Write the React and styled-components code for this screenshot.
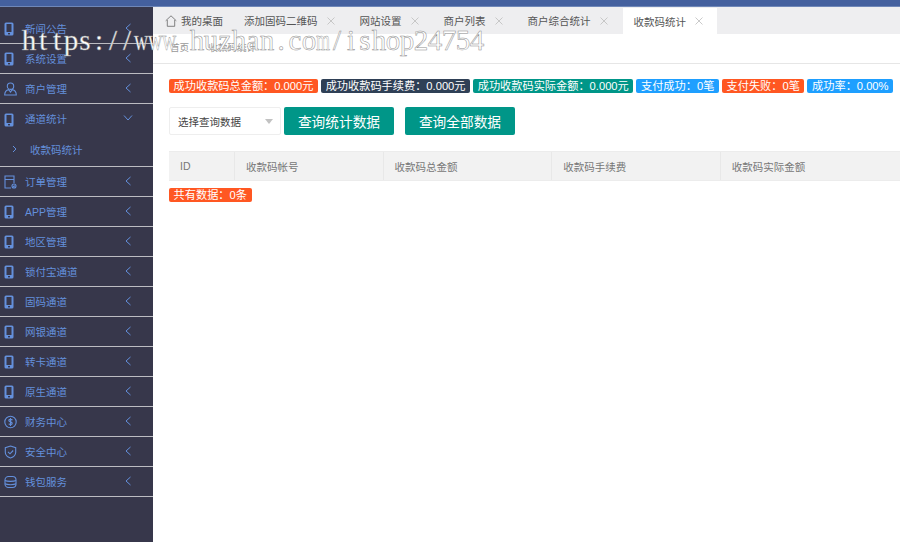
import React from "react";
import styled, { createGlobalStyle } from "styled-components";

const Global = createGlobalStyle`
  html, body { margin: 0; padding: 0; height: 100%; background: #fff; overflow: hidden; }
  #root { height: 100%; }
  * { box-sizing: border-box; }
`;
const font = `"Liberation Sans", "Noto Sans CJK SC", sans-serif`;

const Page = styled.div`
  position: relative; width: 900px; height: 542px; overflow: hidden;
  display: flex; flex-direction: column; font-family: ${font}; font-size: 10.5px; background: #fff;
`;
const TopBar = styled.div`
  height: 7px; flex: none; background: #44609e; border-bottom: 1px solid #6f87b8;
`;
const Body = styled.div`display: flex; flex: 1; min-height: 0;`;
const Sidebar = styled.nav`
  width: 153px; flex: none; background: #37374b; padding-top: 7px;
`;
const Item = styled.div`
  height: 30px; display: flex; align-items: center; position: relative;
  color: #6490dc; border-bottom: ${p => (p.$open ? "0" : "1px solid #bcbcc2")};
  padding: 1px 0 0 4px;
`;
const IconSlot = styled.span`
  width: 21px; flex: none; display: flex; align-items: center;
`;
const ItemLabel = styled.span`flex: 1; line-height: 1;`;
const Chevron = styled.svg`
  width: ${p => (p.$down ? "10px" : "8px")}; height: 10px; margin-right: ${p => (p.$down ? "20px" : "21px")}; margin-top: -3px; flex: none;
`;
const SubItem = styled.div`
  height: 33px; display: flex; align-items: center; color: #6490dc;
  border-bottom: 1px solid #bcbcc2; padding: 0 0 2px 12px; gap: 13px;
`;
const SubArrow = styled.svg`width: 5px; height: 8px; flex: none;`;

const Main = styled.main`flex: 1; min-width: 0; display: flex; flex-direction: column;`;
const TabBar = styled.div`
  height: 27px; flex: none; background: #eeeef0; display: flex; align-items: stretch; padding-left: 1px; color: #555;
`;
const Tab = styled.div`
  display: flex; align-items: center; padding: 0 ${p => (p.$home ? "10px" : "13px")} 0 11px;
  background: ${p => (p.$active ? "#fff" : "transparent")};
  margin: ${p => (p.$active ? "1px 0 0 1px" : "0")};
  gap: ${p => (p.$home ? "4px" : "8px")};
`;
const CloseIcon = styled.svg`width: 10px; height: 10px; flex: none;`;
const Crumbs = styled.div`
  height: 30px; flex: none; border-bottom: 1px solid #e6e6e6; display: flex; align-items: center;
  padding: 0 0 3px 17px; gap: 19px; color: #999; font-size: 9.6px;
`;
const Content = styled.div`padding: 15px 0 0 16px;`;
const Stats = styled.div`display: flex; gap: 3px;`;
const Badge = styled.span`
  height: 14px; line-height: 14px; padding: 0 4.6px; color: #fff; font-size: 11.2px; white-space: nowrap;
  border-radius: 2px; background: ${p => p.$bg};
`;
const Filters = styled.div`display: flex; margin-top: 14px;`;
const Select = styled.div`
  width: 112px; height: 28px; border: 1px solid #eee; border-radius: 2px; background: #fff;
  display: flex; align-items: center; justify-content: space-between; padding: 0 7px 0 8px; color: #444;
`;
const Caret = styled.span`
  width: 0; height: 0; border-left: 4.5px solid transparent; border-right: 4.5px solid transparent; border-top: 5px solid #c2c2c2;
`;
const Button = styled.button`
  width: 110px; height: 28px; margin-left: ${p => p.$gap}px; border: 0; border-radius: 2px; background: #009688;
  color: #fff; font: 13.7px ${font}; padding: 0;
`;
const TableHead = styled.div`
  margin-top: 16px; height: 30px; display: grid; grid-template-columns: 66px 148.600px 168.600px 168.600px 1fr;
  background: #f2f2f2; border-top: 1px solid #ececec; border-bottom: 1px solid #ececec; color: #777;
`;
const HeadCell = styled.div`
  display: flex; align-items: center; padding-left: 11px;
  border-right: 1px solid #e8e8e8;
  &:last-child { border-right: 0; }
`;
const Total = styled(Badge)`display: inline-block; margin-top: 7px;`;
const Watermark = styled.div`
  position: absolute; left: 22px; top: 24px; display: flex; font-family: "Liberation Serif", serif; font-size: 29px;
  line-height: 32px; color: #fff; white-space: nowrap; -webkit-text-stroke: 0.5px #8f8f8f; pointer-events: none;
`;
const WatermarkChar = styled.span`
  width: 14px; flex: none; display: flex; justify-content: center;
  transform: scaleX(${p => p.$squeeze});
`;

const blue = "#6490dc";
const Phone = () => (
  <svg width="10" height="14" viewBox="0 0 10 14">
    <rect x="0.5" y="0.5" width="9" height="13" rx="1.5" fill={blue} />
    <rect x="2.5" y="2" width="5" height="8" fill="#37374b" />
    <rect x="4" y="11" width="2" height="1.4" fill="#37374b" />
  </svg>
);
const stroke = { fill: "none", stroke: blue, strokeWidth: 1.1 };
const User = () => (
  <svg width="13" height="14" viewBox="0 0 13 14" {...stroke}>
    <circle cx="6.5" cy="4.2" r="3.2" /><path d="M.7 13c0-3 2-5 4-5.4l1.8 2.4 1.8-2.4c2 .4 4 2.4 4 5.4z" />
  </svg>
);
const Order = () => (
  <svg width="13" height="14" viewBox="0 0 13 14" {...stroke}>
    <path d="M7 13H1V1h9v7M1 4.500h9" /><circle cx="10" cy="11" r="2" /><path d="M9.200 11l.7.7 1-1.200" />
  </svg>
);
const Money = () => (
  <svg width="13" height="14" viewBox="0 0 13 14" {...stroke}>
    <circle cx="6.500" cy="7" r="5.700" /><path d="M8.400 5.200C8 4.300 5 3.900 4.800 5.400c-.2 1.900 3.600 1 3.400 3-.2 1.600-3 1.200-3.500.3M6.500 3v8" />
  </svg>
);
const Shield = () => (
  <svg width="13" height="14" viewBox="0 0 13 14" {...stroke}>
    <path d="M6.500 1l5.200 1.700v4.600c0 3-2.500 4.900-5.200 5.700C3.800 12.200 1.300 10.300 1.300 7.300V2.700z" /><path d="M4 6.800l2 2 3.200-3.300" />
  </svg>
);
const Wallet = () => (
  <svg width="13" height="14" viewBox="0 0 13 14" {...stroke}>
    <rect x="1" y="1.500" width="11" height="11" rx="3.500" /><path d="M1 5.500c2 1.200 9 1.200 11 0M1 8.800c2 1.200 9 1.200 11 0" />
  </svg>
);
const Left = () => (
  <Chevron viewBox="0 0 8 10"><path d="M6.500 1L2 5l4.500 4" fill="none" stroke={blue} strokeWidth="1" /></Chevron>
);
const Down = () => (
  <Chevron $down viewBox="0 0 10 8"><path d="M1 1.500l4 4.500 4-4.500" fill="none" stroke={blue} strokeWidth="1" /></Chevron>
);
const Close = () => (
  <CloseIcon viewBox="0 0 10 10"><path d="M1.500 1.500l7 7M8.500 1.500l-7 7" stroke="#bdbdbd" strokeWidth=".8" /></CloseIcon>
);
const Home = () => (
  <svg width="12" height="12" viewBox="0 0 12 12" fill="none" stroke="#666" strokeWidth=".8">
    <path d="M.7 5.800L6 .8l5.300 5M2.300 5v6.300h7.400V5" />
  </svg>
);

const menu = [
  ["新闻公告", Phone], ["系统设置", Phone], ["商户管理", User], ["通道统计", Phone, true],
  ["订单管理", Order], ["APP管理", Phone], ["地区管理", Phone], ["锁付宝通道", Phone], ["固码通道", Phone],
  ["网银通道", Phone], ["转卡通道", Phone], ["原生通道", Phone], ["财务中心", Money], ["安全中心", Shield], ["钱包服务", Wallet],
];
const tabs = ["添加固码二维码", "网站设置", "商户列表", "商户综合统计"];
const stats = [
  ["成功收款码总金额：0.000元", "#ff5722"], ["成功收款码手续费：0.000元", "#2f4056"], ["成功收款码实际金额：0.000元", "#009688"],
  ["支付成功：0笔", "#1e9fff"], ["支付失败：0笔", "#ff5722"], ["成功率：0.00%", "#1e9fff"],
];
const heads = ["ID", "收款码帐号", "收款码总金额", "收款码手续费", "收款码实际金额"];
const squeeze = { w: 0.68, m: 0.62 };

export default function App() {
  return (
    <Page>
      <Global />
      <TopBar />
      <Body>
        <Sidebar>
          {menu.map(([label, Icon, open]) => (
            <React.Fragment key={label}>
              <Item $open={open}>
                <IconSlot><Icon /></IconSlot>
                <ItemLabel>{label}</ItemLabel>
                {open ? <Down /> : <Left />}
              </Item>
              {open && (
                <SubItem>
                  <SubArrow viewBox="0 0 5 8"><path d="M1 1l3 3-3 3" fill="none" stroke={blue} /></SubArrow>
                  <span>收款码统计</span>
                </SubItem>
              )}
            </React.Fragment>
          ))}
        </Sidebar>
        <Main>
          <TabBar>
            <Tab $home><Home />我的桌面</Tab>
            {tabs.map(t => <Tab key={t}>{t}<Close /></Tab>)}
            <Tab $active>收款码统计<Close /></Tab>
          </TabBar>
          <Crumbs><span>首页</span><span>收款码统计</span></Crumbs>
          <Content>
            <Stats>{stats.map(([t, c]) => <Badge key={t} $bg={c}>{t}</Badge>)}</Stats>
            <Filters>
              <Select>选择查询数据<Caret /></Select>
              <Button $gap={3}>查询统计数据</Button>
              <Button $gap={11}>查询全部数据</Button>
            </Filters>
            <TableHead>{heads.map(h => <HeadCell key={h}>{h}</HeadCell>)}</TableHead>
            <Total $bg="#ff5722">共有数据：0条</Total>
          </Content>
        </Main>
      </Body>
      <Watermark>
        {[..."https://www.huzhan.com/ishop24754"].map((c, i) => (
          <WatermarkChar key={i} $squeeze={squeeze[c] || 1}>{c}</WatermarkChar>
        ))}
      </Watermark>
    </Page>
  );
}
